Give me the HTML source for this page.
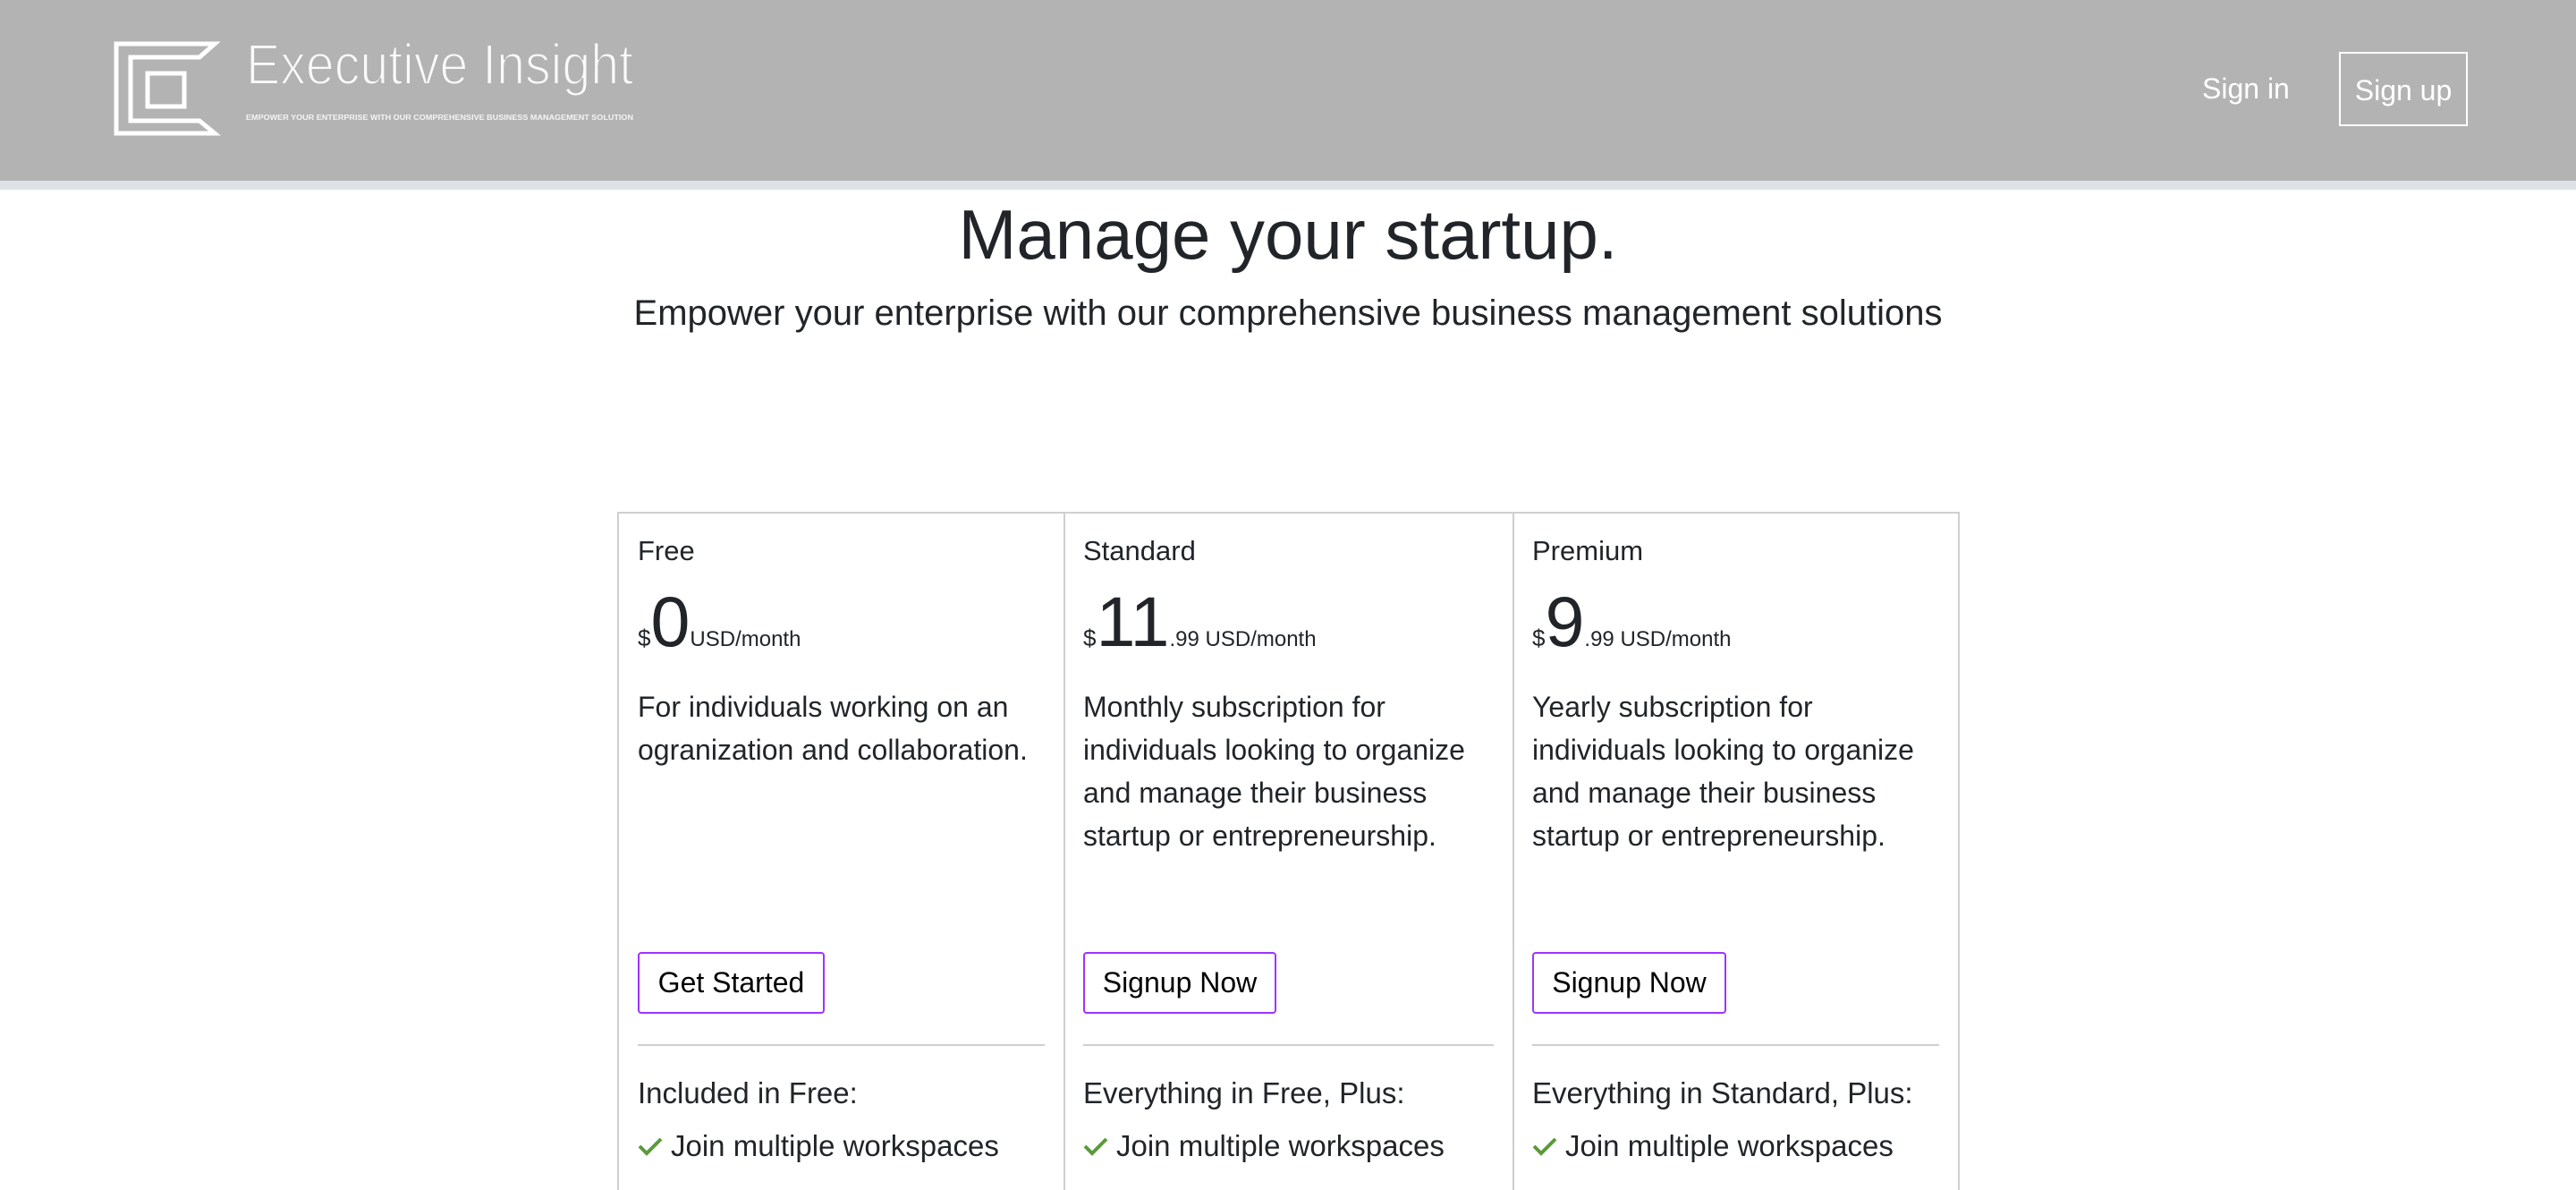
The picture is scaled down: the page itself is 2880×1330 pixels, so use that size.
<!DOCTYPE html>
<html><head><meta charset="utf-8"><style>
*{margin:0;padding:0;box-sizing:border-box}
body{width:2880px;height:1330px;overflow:hidden;background:#fff;font-family:"Liberation Sans",Arial,sans-serif;color:#212529;position:relative}
.a{position:absolute;white-space:nowrap}
.hdr{position:absolute;left:0;top:0;width:2880px;height:202px;background:#b3b3b3}
.strip{position:absolute;left:0;top:202px;width:2880px;height:10px;background:#dee2e6}
.t30{font-size:31px;line-height:31px}
.t33{font-size:33px;line-height:33px}
.desc{font-size:32px;line-height:48px}
.btn{position:absolute;height:69px;border:2px solid #a033ff;border-radius:4px;font-size:32px;line-height:65px;text-align:center;color:#000}
.hr{position:absolute;height:2px;background:#cfcfcf;top:1167px}
.vl{position:absolute;width:2px;background:#cfcfcf;top:572px;height:758px}
.price{display:flex;align-items:baseline}
.price .d{font-size:26px}
.price .big{font-size:79px;line-height:79px}
.price .s{font-size:24px}
</style></head><body>
<div class="hdr"></div>
<div class="strip"></div>
<svg class="a" style="left:120px;top:40px" width="600" height="120" viewBox="120 40 600 120">
 <g fill="none" stroke="#fff" stroke-width="5" stroke-linejoin="miter">
  <path d="M240,49 L130,49 L130,149 L240,149 L223,135 L146,135 L146,64 L223,64 Z"/>
  <rect x="165" y="82" width="41" height="37"/>
 </g>
 <text x="275" y="94" fill="#fafafa" font-family="Liberation Sans, sans-serif" font-size="64" textLength="433" lengthAdjust="spacingAndGlyphs" stroke="#b3b3b3" stroke-width="2">Executive Insight</text>
 <text x="275" y="134" fill="#f4f4f4" font-family="Liberation Sans, sans-serif" font-size="8" font-weight="bold" textLength="433" lengthAdjust="spacingAndGlyphs">EMPOWER YOUR ENTERPRISE WITH OUR COMPREHENSIVE BUSINESS MANAGEMENT SOLUTION</text>
</svg>
<div class="a" style="left:2462px;top:83px;font-size:32px;line-height:32px;color:#fff">Sign in</div>
<div class="a" style="left:2615px;top:58px;width:144px;height:83px;border:2px solid #fff"></div>
<div class="a" style="left:2615px;top:85px;width:144px;text-align:center;font-size:32px;line-height:32px;color:#fff">Sign up</div>

<div class="a" style="left:0;width:2880px;text-align:center;top:223px;font-size:78px;line-height:78px">Manage your startup.</div>
<div class="a" style="left:0;width:2880px;text-align:center;top:330px;font-size:40px;line-height:40px">Empower your enterprise with our comprehensive business management solutions</div>

<div class="a" style="left:690px;top:572px;width:1501px;height:2px;background:#cfcfcf"></div>
<div class="vl" style="left:690px"></div>
<div class="vl" style="left:1189px"></div>
<div class="vl" style="left:1691px"></div>
<div class="vl" style="left:2189px"></div>

<!-- col1 -->
<div class="a t30" style="left:713px;top:600px">Free</div>
<div class="a price" style="left:713px;top:655px"><span class="d">$</span><span class="big">0</span><span class="s">USD/month</span></div>
<div class="a desc" style="left:713px;top:766px">For individuals working on an<br>ogranization and collaboration.</div>
<div class="btn" style="left:713px;top:1064px;width:209px">Get Started</div>
<div class="hr" style="left:713px;width:455px"></div>
<div class="a t33" style="left:713px;top:1205px">Included in Free:</div>

<!-- col2 -->
<div class="a t30" style="left:1211px;top:600px">Standard</div>
<div class="a price" style="left:1211px;top:655px"><span class="d">$</span><span class="big">11</span><span class="s">.99 USD/month</span></div>
<div class="a desc" style="left:1211px;top:766px">Monthly subscription for<br>individuals looking to organize<br>and manage their business<br>startup or entrepreneurship.</div>
<div class="btn" style="left:1211px;top:1064px;width:216px">Signup Now</div>
<div class="hr" style="left:1211px;width:459px"></div>
<div class="a t33" style="left:1211px;top:1205px">Everything in Free, Plus:</div>

<!-- col3 -->
<div class="a t30" style="left:1713px;top:600px">Premium</div>
<div class="a price" style="left:1713px;top:655px"><span class="d">$</span><span class="big">9</span><span class="s">.99 USD/month</span></div>
<div class="a desc" style="left:1713px;top:766px">Yearly subscription for<br>individuals looking to organize<br>and manage their business<br>startup or entrepreneurship.</div>
<div class="btn" style="left:1713px;top:1064px;width:217px">Signup Now</div>
<div class="hr" style="left:1713px;width:455px"></div>
<div class="a t33" style="left:1713px;top:1205px">Everything in Standard, Plus:</div>

<svg class="a" style="left:713px;top:1270px" width="28" height="22" viewBox="0 0 28 22"><path d="M2,11 L10,19 L26,3" fill="none" stroke="#5b9a3c" stroke-width="4"/></svg>
<div class="a t33" style="left:750px;top:1264px">Join multiple workspaces</div>
<svg class="a" style="left:1211px;top:1270px" width="28" height="22" viewBox="0 0 28 22"><path d="M2,11 L10,19 L26,3" fill="none" stroke="#5b9a3c" stroke-width="4"/></svg>
<div class="a t33" style="left:1248px;top:1264px">Join multiple workspaces</div>
<svg class="a" style="left:1713px;top:1270px" width="28" height="22" viewBox="0 0 28 22"><path d="M2,11 L10,19 L26,3" fill="none" stroke="#5b9a3c" stroke-width="4"/></svg>
<div class="a t33" style="left:1750px;top:1264px">Join multiple workspaces</div>
</body></html>
